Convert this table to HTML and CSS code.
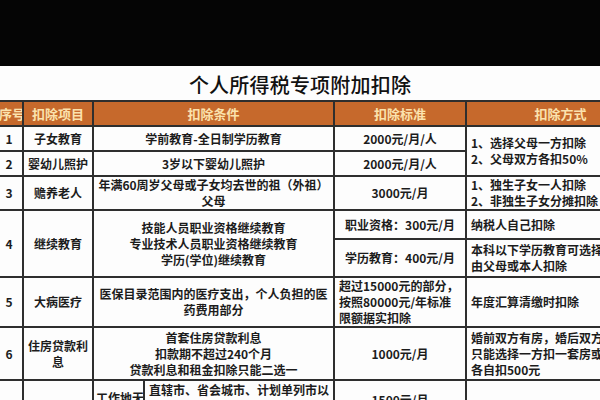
FILE: index.html
```html
<!DOCTYPE html>
<html lang="zh-CN">
<head>
<meta charset="utf-8">
<title>个人所得税专项附加扣除</title>
<link rel="stylesheet" href="styles.css">
</head>
<body>
<div class="page">
  <div class="topbar"></div>
  <h1 class="title">个人所得税专项附加扣除</h1>
  <table class="tax">
    <colgroup>
      <col class="c-no"><col class="c-item"><col class="c-cond-a"><col class="c-cond-b"><col class="c-std"><col class="c-way">
    </colgroup>
    <thead>
      <tr class="h-row">
        <th>序号</th><th>扣除项目</th><th colspan="2">扣除条件</th><th>扣除标准</th><th>扣除方式</th>
      </tr>
    </thead>
    <tbody>
      <tr class="r1">
        <td>1</td><td>子女教育</td><td colspan="2">学前教育-全日制学历教育</td><td>2000元/月/人</td>
        <td rowspan="2" class="left">1、选择父母一方扣除<br>2、父母双方各扣50%</td>
      </tr>
      <tr class="r2">
        <td>2</td><td>婴幼儿照护</td><td colspan="2">3岁以下婴幼儿照护</td><td>2000元/月/人</td>
      </tr>
      <tr class="r3">
        <td>3</td><td>赡养老人</td><td colspan="2">年满60周岁父母或子女均去世的祖（外祖）<br>父母</td><td>3000元/月</td>
        <td class="left">1、独生子女一人扣除<br>2、非独生子女分摊扣除</td>
      </tr>
      <tr class="r4a">
        <td rowspan="2">4</td><td rowspan="2">继续教育</td>
        <td colspan="2" rowspan="2">技能人员职业资格继续教育<br>专业技术人员职业资格继续教育<br>学历(学位)继续教育</td>
        <td>职业资格：300元/月</td><td class="left">纳税人自己扣除</td>
      </tr>
      <tr class="r4b">
        <td>学历教育：400元/月</td><td class="left">本科以下学历教育可选择<br>由父母或本人扣除</td>
      </tr>
      <tr class="r5">
        <td>5</td><td>大病医疗</td><td colspan="2">医保目录范围内的医疗支出，个人负担的医<br>药费用部分</td>
        <td class="left">超过15000元的部分，<br>按照80000元/年标准<br>限额据实扣除</td>
        <td class="left">年度汇算清缴时扣除</td>
      </tr>
      <tr class="r6">
        <td>6</td><td class="wrap"><div class="stack"><span>住房贷款利</span><span>息</span></div></td><td colspan="2">首套住房贷款利息<br>扣款期不超过240个月<br>贷款利息和租金扣除只能二选一</td>
        <td>1000元/月</td>
        <td class="left">婚前双方有房，婚后双方<br>只能选择一方扣一套房或<br>各自扣500元</td>
      </tr>
      <tr class="r7">
        <td></td><td></td><td class="low">工作地无</td><td class="left top">直辖市、省会城市、计划单列市以</td>
        <td class="mid">1500元/月</td><td></td>
      </tr>
    </tbody>
  </table>
</div>
</body>
</html>
```
FILE: styles.css
```css
html, body {
  margin: 0;
  padding: 0;
  background: #000;
}
.page {
  width: 600px;
  height: 400px;
  overflow: hidden;
  background: #fdfdfd;
  font-family: "Noto Sans CJK SC", "Liberation Sans", sans-serif;
  color: #1c1c1c;
}
.topbar {
  height: 66px;
  background: #050505;
}
.title {
  margin: 0;
  height: 34px;
  padding-top: 3px;
  box-sizing: border-box;
  line-height: 31px;
  font-size: 20px;
  font-weight: 500;
  text-align: center;
  color: #111;
  letter-spacing: 0.2px;
}
.tax {
  margin-left: -6px;
  width: 660px;
  table-layout: fixed;
  border-collapse: collapse;
  font-size: 12px;
  font-weight: 700;
  line-height: 16px;
}
.c-no { width: 28px; }
.c-item { width: 70px; }
.c-cond-a { width: 51px; }
.c-cond-b { width: 190px; }
.c-std { width: 132px; }
.c-way { width: 189px; }

.tax th, .tax td {
  border: 2px solid #2e2e2e;
  padding: 0 3px;
  text-align: center;
  vertical-align: middle;
  white-space: nowrap;
  overflow: hidden;
}
.tax th {
  background: #c6692c;
  color: #fbe2ad;
  font-size: 13px;
  font-weight: 700;
  height: 23px;
}
.tax td.wrap { white-space: normal; }
.stack {
  display: flex;
  flex-direction: column;
  align-items: center;
}
.tax td.left { text-align: left; padding-left: 4px; }
.tax td.top { vertical-align: top; padding-top: 1px; }
.tax td.low { vertical-align: top; padding-top: 9px; padding-left: 2px; padding-right: 0; }
.tax td.mid { vertical-align: top; padding-top: 11px; }

.r1 td { height: 23px; }
.r2 td { height: 23px; }
.r3 td { height: 32px; }
.r4a td { height: 27px; }
.r4b td { height: 36px; }
.r5 td { height: 46px; }
.r6 td { height: 51px; }
.r7 td { height: 40px; }
```
